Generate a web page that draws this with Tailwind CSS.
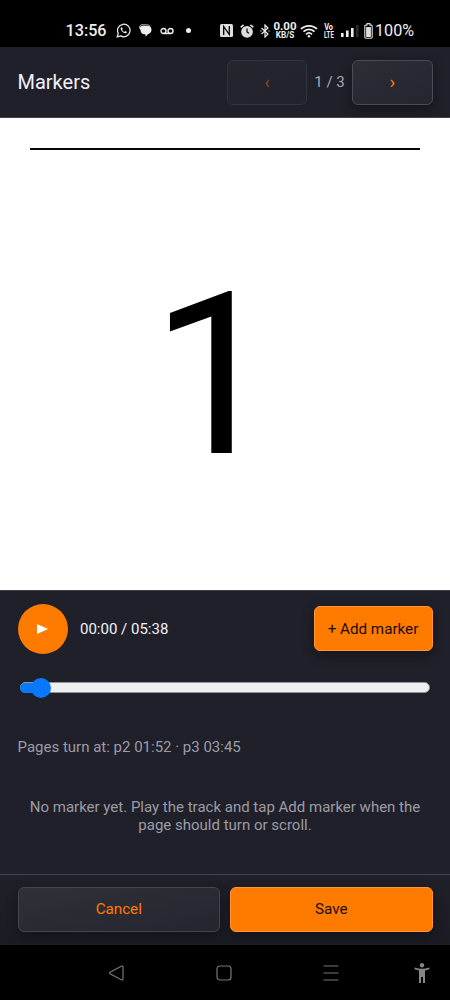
<!DOCTYPE html>
<html lang="en">
<head>
<meta charset="utf-8">
<title>Markers</title>
<script src="https://cdn.jsdelivr.net/npm/@tailwindcss/browser@4"></script>
</head>
<body class="bg-black">
<div class="flex h-[1000px] w-[450px] flex-col overflow-hidden bg-black font-[Roboto,sans-serif] text-[15px] leading-[18px] text-[#f1f0fa]">
  <header class="flex h-[47px] shrink-0 items-center pt-[14px] pl-[65.500px] text-[#eeeeee]">
    <span class="w-[50px] text-[16.2px] font-medium whitespace-nowrap">13:56</span>
    <svg class="size-[15px]" viewBox="0 0 24 24" fill="none" stroke="currentColor" stroke-width="2"><path d="M2 22l1.600-5.500A10 10 0 1 1 7.500 20.600z"/><path d="M8.200 6.700c-3 2.500 3.500 11 8 9.500 1.500-.8 1.200-2 .9-2.300l-2.500-1.200-1.400 1.500c-1.500-.5-2.800-1.800-3.400-3.300l1-1.400-1-2.400z" fill="currentColor" stroke="none"/></svg>
    <svg class="ml-[8px] size-[13px]" viewBox="0 0 13 13" fill="currentColor"><path d="M4 1.800h4.500c2.700 0 4 1.700 4 3.900s-1.300 3.800-3.300 4.300L6.500 12.800v-2.500H5C2.500 10 1.500 8 1.600 6L.5 4.500Q.8 1.800 4 1.800z"/><path d="M.6 4C.6 1.500 1.500.8 3 .8h4.500c2 0 3 .6 3.800 1.500" fill="none" stroke="#bbb" stroke-width="1"/></svg>
    <svg class="ml-[8px] h-[8px] w-[14px]" viewBox="0 0 14 8" fill="none" stroke="currentColor" stroke-width="1.400"><circle cx="3.500" cy="4" r="2.500"/><circle cx="10.500" cy="4" r="2.500"/><path d="M3.500 6.500h7"/></svg>
    <span class="ml-[12px] size-[5px] rounded-full bg-[#eeeeee]"></span>
    <svg class="ml-[29px] size-[13px]" viewBox="0 0 13 13"><rect width="13" height="13" rx="1.500" fill="#dddddd"/><path d="M3.700 11V2.500l5.600 8V2" fill="none" stroke="#000" stroke-width="1.300"/></svg>
    <svg class="ml-[7px] h-[14px] w-[14px]" viewBox="0 0 14 14"><circle cx="7" cy="7.800" r="5.900" fill="#dddddd"/><path d="M.7 3.300L3.600.8M13.300 3.300L10.400.8" stroke="#dddddd" stroke-width="1.600"/><path d="M7 4.500V8l2 1.300" fill="none" stroke="#000" stroke-width="1.200"/></svg>
    <svg class="ml-[6px] h-[14px] w-[10px]" viewBox="0 0 10 14" fill="none" stroke="currentColor" stroke-width="1.200"><path d="M1.500 4l6.500 6-3 3V1l3 3-6.500 6"/><path d="M.3 7h1.200M8.500 7h1.200"/></svg>
    <span class="ml-[4px] flex h-[17px] w-[23px] flex-col items-center font-bold whitespace-nowrap"><span class="h-[9px] text-[11.500px] leading-[9px]">0.00</span><span class="h-[8px] text-[8.200px] leading-[8px]">KB/S</span></span>
    <svg class="ml-[3px] h-[14px] w-[18px]" viewBox="0 0 18 14" fill="none" stroke="currentColor" stroke-width="1.800"><path d="M1 5C5 .7 13 .7 17 5M3.500 7.700c3-3.200 8-3.200 11 0M6 10.300c2-1.900 4-1.900 6 0"/><circle cx="9" cy="12.300" r="1.200" fill="currentColor" stroke="none"/></svg>
    <svg class="ml-[5.500px] h-[16px] w-[12px] overflow-visible" viewBox="0 0 12 16" fill="currentColor" font-family="Roboto, sans-serif" font-weight="700"><text x="1.200" y="7" font-size="8.200" textLength="8.800" lengthAdjust="spacingAndGlyphs">Vo</text><text x="1" y="14.500" font-size="8.200" textLength="9.800" lengthAdjust="spacingAndGlyphs">LTE</text></svg>
    <svg class="ml-[5.500px] h-[13px] w-[18px]" viewBox="0 0 18 13" fill="currentColor"><path d="M0 9h2.600v4H0zM5 6.500h2.600V13H5zM10 4h2.600v9H10z"/><path d="M15 1h2.600v12H15z" fill="#292929"/></svg>
    <svg class="ml-[5px] h-[16px] w-[9px]" viewBox="0 0 9 16"><path d="M3 .6h3v1.500h1.200q1 0 1 1v11q0 1.200-1 1.200H1.800q-1 0-1-1.200v-11q0-1 1-1H3z" fill="none" stroke="#ddd" stroke-width="1.100"/><rect x="2.100" y="4" width="4.800" height="10" fill="#ddd"/></svg>
    <span class="ml-[2.500px] text-[16.200px] whitespace-nowrap">100%</span>
  </header>

  <div class="flex h-[71px] shrink-0 items-center border-b border-[#41424d] bg-[#20202a] pr-[17.500px] pl-[17.500px]">
    <h1 class="flex-1 text-[20px] leading-6">Markers</h1>
    <button class="h-[45px] w-[80px] rounded-[6px] border border-[#4b4b56] bg-linear-to-br from-[#2d2d36] to-[#252530] text-[19px] text-[#ff7b00] opacity-45">‹</button>
    <span class="w-[45px] text-center text-[#aaaab5]">1 / 3</span>
    <button class="h-[45px] w-[80.500px] rounded-[6px] border border-[#4b4b56] bg-linear-to-br from-[#2d2d36] to-[#252530] text-[19px] text-[#ff7b00] shadow-[0_4px_12px_#00000066]">›</button>
  </div>

  <main class="flex h-[472px] shrink-0 flex-col bg-white px-[30px] pt-[30px] text-black">
    <div class="h-[2px] w-[390px] bg-[#08080c]"></div>
    <div class="mt-[92px] pl-[121px] text-[227px] leading-[267px]">1</div>
  </main>

  <section class="flex h-[284px] shrink-0 flex-col border-t border-[#41424d] bg-[#20202a] px-[17.500px] pt-[12.500px]">
    <div class="flex h-[50px] items-center">
      <button class="flex size-[50px] items-center justify-center rounded-full bg-[#ff7b00]"><svg class="h-[10px] w-[11px]" viewBox="0 0 11 10"><path d="M0 0l11 5-11 5z" fill="white"/></svg></button>
      <span class="ml-[12.500px] flex-1">00:00 / 05:38</span>
      <button class="h-[45.500px] w-[119px] rounded-[6px] border border-[#ff963a] bg-[#ff7b00] text-[15.200px] whitespace-nowrap text-[#1b0c08] shadow-[0_4px_12px_#00000066]">+ Add marker</button>
    </div>
    <div class="mt-[24px] ml-[2.500px] flex h-[20px] w-[410px] items-center">
      <div class="flex h-[11px] w-full items-center rounded-full border border-[#93939b] bg-[#efefef]">
        <span class="-ml-px h-[10px] w-[20px] shrink-0 rounded-l-full bg-[#0878ff]"></span>
        <span class="-ml-[9px] size-[20px] shrink-0 rounded-full bg-[#0878ff]"></span>
      </div>
    </div>
    <p class="mt-[40.500px] text-[#9c9ca6]">Pages turn at: p2 01:52 · p3 03:45</p>
    <p class="mt-[43px] text-center leading-[17.500px] text-[#9c9ca6]">No marker yet. Play the track and tap Add marker when the<br>page should turn or scroll.</p>
  </section>

  <footer class="flex h-[71px] shrink-0 gap-[10px] border-t border-[#41424d] bg-linear-to-b from-[#20202a] to-[#1b1b23] px-[17.500px] pt-[12.400px]">
    <button class="h-[45px] flex-1 rounded-[6px] border border-[#464650] bg-linear-to-br from-[#303038] to-[#252530] pb-px text-[15.200px] text-[#ff7b00] shadow-[0_4px_12px_#00000055]">Cancel</button>
    <button class="h-[45px] flex-1 rounded-[6px] border border-[#ff963a] bg-[#ff7b00] pb-px text-[15.200px] text-[#1b0c08] shadow-[0_4px_12px_#00000055]">Save</button>
  </footer>

  <nav class="flex h-[55px] shrink-0 items-center pl-[108px] text-[#777777]">
    <svg class="size-[16px]" viewBox="0 0 16 16" fill="none" stroke="currentColor" stroke-width="1.200"><path d="M13.800 1L2 7.300q-1 .7 0 1.400L13.800 15q1.200.3 1.200-1V2q0-1.300-1.200-1z"/></svg>
    <svg class="ml-[91.500px] size-[16px]" viewBox="0 0 16 16" fill="none" stroke="currentColor" stroke-width="1.200"><rect x="1" y="1" width="14" height="14" rx="3"/></svg>
    <svg class="ml-[91.500px] size-[16px]" viewBox="0 0 16 16" fill="none" stroke="currentColor" stroke-width="1"><path d="M.5 1h15M.5 8h15M.5 15h15"/></svg>
    <svg class="ml-[75px] h-[20px] w-[16px]" viewBox="0 0 16 20" fill="#858585"><circle cx="8" cy="2.300" r="2.200"/><path d="M.8 4.500Q8 7 15.200 4.500l.4 1.700L11 7.500V20H9v-6H7v6H5V7.500L.4 6.200z"/></svg>
  </nav>
</div>
</body>
</html>
